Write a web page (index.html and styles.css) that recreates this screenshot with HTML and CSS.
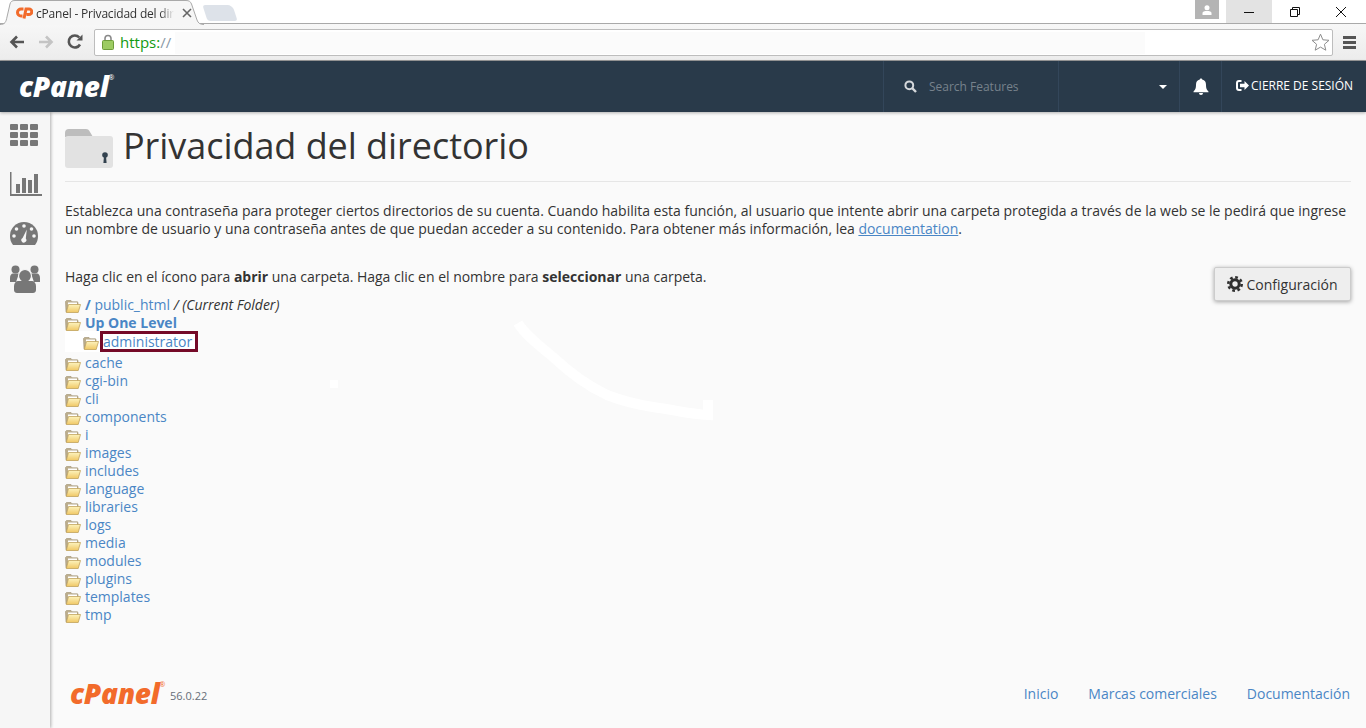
FILE: index.html
```html
<!DOCTYPE html>
<html lang="es">
<head>
    <meta charset="UTF-8">
    <meta name="viewport" content="width=device-width, initial-scale=1.0">
    <title>cPanel - Privacidad del directorio</title>
    <link rel="stylesheet" href="styles.css">
</head>
<body>
    <svg width="0" height="0" class="defs">
        <linearGradient id="fld-front" x1="0" y1="0" x2="0" y2="1">
            <stop offset="0" stop-color="#fdf3bd"/>
            <stop offset="1" stop-color="#f0c865"/>
        </linearGradient>
        <symbol id="folder" viewBox="0 0 16 14">
            <path d="M.5 2.500 1.500 1.500H6l1 1.300h5.500l.5 1V6H3L1.500 13H1z" fill="#bcae8e" stroke="#a09070" stroke-width=".6"/>
            <path d="M3 3.500h9V6H3z" fill="#fff"/>
            <path d="M3.500 5.500H15.500L13.200 13.500H1.300z" fill="url(#fld-front)" stroke="#c2a35c" stroke-width=".8"/>
        </symbol>
    </svg>

    <div class="browser">
        <div class="tabstrip">
            <div class="tab">
                <svg class="tab-shape" width="204" height="25" viewBox="0 0 204 25"><path d="M0 24.500C5 24.500 6 22 7 17L10 4C10.700 1.500 12 .5 15 .5H186C189 .5 190.500 1.500 191.500 4L197 20C198 23 200 24.500 204 24.500" fill="#f6f6f6" stroke="#a9a9a9"/></svg>
                <svg class="favicon" width="17" height="12" viewBox="0 0 17 12"><path d="M7.500 2H5a3.500 3.500 0 0 0 0 7H6.500" fill="none" stroke="#f26b2b" stroke-width="3"/><path d="M8 11.500 10 2H13a2.700 2.700 0 0 1 0 5.600H10.500" fill="none" stroke="#f26b2b" stroke-width="3"/></svg>
                <span class="tab-title">cPanel - Privacidad del dir</span>
                <svg class="tab-close" width="10" height="10" viewBox="0 0 10 10"><path d="M1 1l8 8M9 1 1 9" stroke="#666" stroke-width="1.600"/></svg>
            </div>
            <div class="new-tab"></div>
            <div class="win-controls">
                <div class="win-user">
                    <svg width="12" height="10" viewBox="0 0 12 10"><circle cx="6" cy="2.800" r="2.500" fill="#fff"/><path d="M1.500 10V8C1.500 6.500 3.500 6 6 6s4.500.5 4.500 2v2z" fill="#fff"/></svg>
                </div>
                <div class="win-btn win-min"><svg width="12" height="12" viewBox="0 0 12 12"><path d="M1 6.500h10" stroke="#111"/></svg></div>
                <div class="win-btn"><svg width="12" height="12" viewBox="0 0 12 12"><path d="M1.500 3.500h7v7h-7zM3.500 3.500v-2h7v7h-2" fill="none" stroke="#111"/></svg></div>
                <div class="win-btn"><svg width="12" height="12" viewBox="0 0 12 12"><path d="M1 1l10 10M11 1 1 11" stroke="#111"/></svg></div>
            </div>
        </div>
        <div class="toolbar">
            <svg class="nav-icon" width="16" height="14" viewBox="0 0 16 14"><path d="M15 7H3M8 1.500 2.500 7 8 12.500" fill="none" stroke="#555" stroke-width="2.600"/></svg>
            <svg class="nav-icon" width="16" height="14" viewBox="0 0 16 14"><path d="M1 7h12M8 1.500 13.500 7 8 12.500" fill="none" stroke="#c4c4c4" stroke-width="2.600"/></svg>
            <svg class="nav-icon" width="16" height="16" viewBox="0 0 16 16"><path d="M13 10.500A6 6 0 1 1 12.300 3.500" fill="none" stroke="#555" stroke-width="2.600"/><path d="M9.500 6.500H15.500V.5z" fill="#555"/></svg>
            <div class="urlbar">
                <svg class="lock" width="12" height="16" viewBox="0 0 12 16"><path d="M3 7V4.500a3 3 0 0 1 6 0V7" fill="none" stroke="#8a8a8a" stroke-width="1.600"/><rect x=".5" y="6.500" width="11" height="9" rx="1" fill="#9ccb62" stroke="#6d9c3a"/></svg>
                <span class="url"><span class="url-scheme">https:</span>//</span>
                <div class="url-fade"></div>
                <svg class="star" width="19" height="18" viewBox="0 0 19 18"><path d="M9.500 1.200 11.900 6.800 18 7.300 13.400 11.300 14.800 17.200 9.500 14.100 4.200 17.200 5.600 11.300 1 7.300 7.100 6.800z" fill="none" stroke="#8c8c8c"/></svg>
            </div>
            <div class="menu-btn"><span></span><span></span><span></span></div>
        </div>
    </div>

    <header class="cp-header">
        <div class="cp-logo">cPanel<sup>&reg;</sup></div>
        <div class="cp-search">
            <svg width="13" height="13" viewBox="0 0 13 13"><circle cx="5.300" cy="5.300" r="3.900" fill="none" stroke="#d5d8db" stroke-width="2"/><path d="M8.200 8.200 12 12" stroke="#d5d8db" stroke-width="2.400"/></svg>
            <span>Search Features</span>
        </div>
        <div class="cp-user"><span class="caret"></span></div>
        <div class="cp-bell">
            <svg width="16" height="18" viewBox="0 0 16 18"><path d="M8 .5c.7 0 1.200.5 1.200 1.100C11.800 2.100 13 4.200 13 6.800c0 4 1 5.200 2.500 6.700v.8H.5v-.8C2 12 3 10.800 3 6.800 3 4.200 4.200 2.100 6.800 1.600 6.800 1 7.300.5 8 .5z" fill="#fff"/><path d="M6 15h4a2 2 0 0 1-4 0z" fill="#fff"/></svg>
        </div>
        <div class="cp-logout">
            <svg width="13" height="11" viewBox="0 0 13 11"><path d="M5.500 1H3a2 2 0 0 0-2 2v5a2 2 0 0 0 2 2h2.500" fill="none" stroke="#fff" stroke-width="2"/><path d="M4 3.800h4.500V1L13 5.500 8.500 10V7.200H4z" fill="#fff"/></svg>
            <span>CIERRE DE SESIÓN</span>
        </div>
    </header>

    <div class="cp-body">
        <nav class="sidebar">
            <svg width="28" height="22" viewBox="0 0 28 22" class="side-grid">
                <rect x="0" y="0" width="8" height="6" rx="1"/><rect x="10" y="0" width="8" height="6" rx="1"/><rect x="20" y="0" width="8" height="6" rx="1"/>
                <rect x="0" y="8" width="8" height="6" rx="1"/><rect x="10" y="8" width="8" height="6" rx="1"/><rect x="20" y="8" width="8" height="6" rx="1"/>
                <rect x="0" y="16" width="8" height="6" rx="1"/><rect x="10" y="16" width="8" height="6" rx="1"/><rect x="20" y="16" width="8" height="6" rx="1"/>
            </svg>
            <svg width="32" height="24" viewBox="0 0 32 24" class="side-chart">
                <path d="M0 0h1.500v22H32v2H0z"/><rect x="6" y="12" width="4" height="9"/><rect x="12" y="6" width="4" height="15"/><rect x="18" y="8" width="4" height="13"/><rect x="24" y="2" width="4" height="19"/>
            </svg>
            <svg width="28" height="23" viewBox="0 0 28 23" class="side-gauge">
                <path d="M14 0a14 14 0 0 1 14 14c0 3.500-1 6.500-3 9H3c-2-2.500-3-5.500-3-9A14 14 0 0 1 14 0z"/>
                <g fill="#f6f6f6"><circle cx="14" cy="4" r="1.800"/><circle cx="6.500" cy="7" r="1.800"/><circle cx="21.500" cy="7" r="1.800"/><circle cx="4" cy="14" r="1.800"/><circle cx="24" cy="14" r="1.800"/><path d="M16.800 7.500 15.800 16.500a2.500 2.500 0 1 1-3.200-.6z"/></g>
            </svg>
            <svg width="30" height="30" viewBox="0 0 30 30" class="side-users">
                <circle cx="5.500" cy="5.500" r="4"/><circle cx="24.500" cy="5.500" r="4"/>
                <path d="M0 18v-4c0-3 1.500-4.500 3-4.500h6l-3 8.500zM30 18v-4c0-3-1.500-4.500-3-4.500h-6l3 8.500z"/>
                <circle cx="15" cy="12" r="6.500" stroke="#f6f6f6" stroke-width="1.200"/>
                <path d="M4 26v-4c0-3 2-5 4-5h14c2 0 4 2 4 5v4c0 2-1.500 3-3 3H7c-1.500 0-3-1-3-3z"/>
            </svg>
        </nav>

        <main class="content">
            <div class="page-head">
                <svg width="48" height="40" viewBox="0 0 48 40">
                    <path d="M0 5a4 4 0 0 1 4-4h17c2 0 3 1 4 3l3 5H0z" fill="#bdbdbd"/>
                    <rect x="0" y="8" width="48" height="32" rx="3" fill="#e2e2e2"/>
                    <circle cx="40" cy="27" r="2.800" fill="#33424f"/><path d="M39 28h2l.6 7h-3.200z" fill="#33424f"/>
                </svg>
                <h1>Privacidad del directorio</h1>
            </div>
            <p class="intro">Establezca una contraseña para proteger ciertos directorios de su cuenta. Cuando habilita esta función, al usuario que intente abrir una carpeta protegida a través de la web se le pedirá que ingrese un nombre de usuario y una contraseña antes de que puedan acceder a su contenido. Para obtener más información, lea <a href="#" class="doc-link">documentation</a>.</p>

            <div class="browse">
                <div class="browse-main">
                    <p class="hint">Haga clic en el ícono para <b>abrir</b> una carpeta. Haga clic en el nombre para <b>seleccionar</b> una carpeta.</p>
                    <ul class="tree">
                        <li><svg class="fld"><use href="#folder"/></svg><a href="#" class="strong">/</a>&nbsp;<a href="#">public_html</a>&nbsp;<span class="slash">/</span>&nbsp;<em>(Current Folder)</em></li>
                        <li><svg class="fld"><use href="#folder"/></svg><a href="#" class="strong">Up One Level</a></li>
                        <li class="selected"><svg class="fld"><use href="#folder"/></svg><a href="#" class="sel-box">administrator</a></li>
                        <li><svg class="fld"><use href="#folder"/></svg><a href="#">cache</a></li>
                        <li><svg class="fld"><use href="#folder"/></svg><a href="#">cgi-bin</a></li>
                        <li><svg class="fld"><use href="#folder"/></svg><a href="#">cli</a></li>
                        <li><svg class="fld"><use href="#folder"/></svg><a href="#">components</a></li>
                        <li><svg class="fld"><use href="#folder"/></svg><a href="#">i</a></li>
                        <li><svg class="fld"><use href="#folder"/></svg><a href="#">images</a></li>
                        <li><svg class="fld"><use href="#folder"/></svg><a href="#">includes</a></li>
                        <li><svg class="fld"><use href="#folder"/></svg><a href="#">language</a></li>
                        <li><svg class="fld"><use href="#folder"/></svg><a href="#">libraries</a></li>
                        <li><svg class="fld"><use href="#folder"/></svg><a href="#">logs</a></li>
                        <li><svg class="fld"><use href="#folder"/></svg><a href="#">media</a></li>
                        <li><svg class="fld"><use href="#folder"/></svg><a href="#">modules</a></li>
                        <li><svg class="fld"><use href="#folder"/></svg><a href="#">plugins</a></li>
                        <li><svg class="fld"><use href="#folder"/></svg><a href="#">templates</a></li>
                        <li><svg class="fld"><use href="#folder"/></svg><a href="#">tmp</a></li>
                    </ul>
                </div>
                <button class="settings-btn">
                    <svg width="16" height="16" viewBox="0 0 16 16"><circle cx="8" cy="8" r="4.200" fill="none" stroke="#2f2f2f" stroke-width="3"/><circle cx="8" cy="8" r="6.700" fill="none" stroke="#2f2f2f" stroke-width="2.600" stroke-dasharray="2.700 2.560"/></svg>
                    Configuración
                </button>
            </div>

            <footer class="cp-footer">
                <div class="foot-brand"><span class="foot-logo">cPanel<sup>&reg;</sup></span><span class="version">56.0.22</span></div>
                <div class="foot-links"><a href="#">Inicio</a><a href="#">Marcas comerciales</a><a href="#">Documentación</a></div>
            </footer>
        </main>
    </div>

    <!-- white scribble that sits on top of the page -->
    <svg class="scribble" width="1366" height="728" viewBox="0 0 1366 728">
        <path d="M518 323 C525 335 540 346 553 357 C570 373 590 387 607 395 C625 402 640 405 653 407 C675 410 690 414 708 415 L708 400" fill="none" stroke="#fff" stroke-width="10"/>
        <rect x="330" y="380" width="8" height="8" fill="#fff"/>
    </svg>
</body>
</html>
```

FILE: styles.css
```css
* {
    box-sizing: border-box;
}

html, body {
    margin: 0;
    height: 728px;
    overflow: hidden;
}

body {
    font-family: "Open Sans", Arial, sans-serif;
    font-size: 14px;
    letter-spacing: -0.01px;
    color: #333;
    background-color: #fafafa;
    display: flex;
    flex-direction: column;
}

a {
    color: #4a86c5;
    text-decoration: none;
}

.defs {
    position: absolute;
}

/* browser window */
.browser {
    height: 61px;
    flex: none;
}

.tabstrip {
    height: 24px;
    background-color: #fff;
    display: flex;
    align-items: flex-start;
    position: relative;
    border-bottom: 1px solid #a9a9a9;
}

.tab {
    position: relative;
    width: 200px;
    height: 25px;
    display: flex;
    align-items: center;
    padding: 1px 0 0 16px;
    z-index: 1;
}

.tab-shape {
    position: absolute;
    left: 0;
    top: 0;
}

.favicon {
    position: relative;
    flex: none;
    margin-right: 3px;
}

.tab-title {
    position: relative;
    width: 138px;
    overflow: hidden;
    white-space: nowrap;
    font-size: 12px;
    letter-spacing: -0.2px;
    color: #333;
    -webkit-mask-image: linear-gradient(to right, #000 90%, transparent);
    mask-image: linear-gradient(to right, #000 90%, transparent);
}

.tab-close {
    position: relative;
    margin-left: 8px;
    flex: none;
}

.new-tab {
    width: 30px;
    height: 16px;
    margin: 5px 0 0 5px;
    background-color: #dde2e9;
    border-radius: 3px 5px 3px 3px;
    transform: skewX(18deg);
}

.win-controls {
    margin-left: auto;
    margin-right: 2px;
    display: flex;
    align-items: flex-start;
    height: 23px;
}

.win-user {
    width: 24px;
    height: 19px;
    margin-right: 7px;
    background-color: #b4b4b4;
    display: flex;
    align-items: center;
    justify-content: center;
}

.win-btn {
    width: 46px;
    height: 23px;
    display: flex;
    align-items: center;
    justify-content: center;
}

.win-min {
    background-color: #e3e3e3;
}

.toolbar {
    height: 37px;
    background: linear-gradient(#f7f7f7, #ececec);
    border-bottom: 1px solid #9a9a9a;
    display: flex;
    align-items: center;
    padding-left: 9px;
    gap: 13px;
}

.nav-icon {
    flex: none;
}

.urlbar {
    width: 1239px;
    height: 27px;
    margin-left: -2px;
    background-color: #fff;
    border: 1px solid #bdbdbd;
    border-radius: 2px;
    display: flex;
    align-items: center;
    padding-left: 7px;
    position: relative;
}

.url-fade {
    position: absolute;
    left: 80px;
    top: 2px;
    width: 970px;
    height: 22px;
    background-color: #fbfbfb;
}

.lock {
    flex: none;
}

.url {
    position: relative;
    margin-left: 6px;
    font-size: 15px;
    letter-spacing: 0;
    color: #8a9aa8;
    z-index: 1;
}

.url-scheme {
    color: #129a12;
}

.star {
    margin-left: auto;
    margin-right: 2px;
    position: relative;
}

.menu-btn {
    margin-left: -3px;
    width: 13px;
    display: flex;
    flex-direction: column;
    gap: 2px;
}

.menu-btn span {
    height: 3px;
    background-color: #555;
}

/* cpanel header */
.cp-header {
    height: 51px;
    flex: none;
    background-color: #293a4a;
    display: flex;
    align-items: stretch;
    color: #fff;
    box-shadow: 0 1px 3px rgba(0, 0, 0, 0.3);
    position: relative;
    z-index: 2;
}

.cp-logo {
    width: 883px;
    padding-left: 19px;
    font-style: italic;
    font-weight: 800;
    font-size: 28px;
    letter-spacing: -0.3px;
    line-height: 50px;
}

.cp-logo sup {
    font-size: 7px;
    font-style: normal;
    font-weight: 400;
    vertical-align: 17px;
    line-height: 0;
}

.cp-search {
    width: 175px;
    border-left: 1px solid #33465a;
    display: flex;
    align-items: center;
    padding-left: 20px;
    gap: 12px;
    font-size: 12px;
    color: #77828c;
}

.cp-user {
    width: 121px;
    border-left: 1px solid #33465a;
    display: flex;
    align-items: center;
    justify-content: flex-end;
    padding-right: 12px;
}

.caret {
    border-top: 4px solid #fff;
    border-left: 4px solid transparent;
    border-right: 4px solid transparent;
}

.cp-bell {
    width: 42px;
    border-left: 1px solid #33465a;
    display: flex;
    align-items: center;
    justify-content: center;
}

.cp-logout {
    flex: 1;
    border-left: 1px solid #33465a;
    display: flex;
    align-items: center;
    padding: 0 0 2px 14px;
    gap: 2px;
    font-size: 12px;
    white-space: nowrap;
}

/* page */
.cp-body {
    flex: 1;
    display: flex;
    min-height: 0;
}

.sidebar {
    width: 50px;
    flex: none;
    background-color: #f6f6f6;
    box-shadow: 1px 0 3px rgba(0, 0, 0, 0.3);
    padding: 12px 0 0 10px;
    display: flex;
    flex-direction: column;
    align-items: flex-start;
    fill: #777;
}

.side-chart {
    margin-top: 26px;
}

.side-gauge {
    margin-top: 26px;
}

.side-users {
    margin-top: 19px;
}

.content {
    flex: 1;
    padding: 16px 15px 0;
    display: flex;
    flex-direction: column;
    min-width: 0;
}

.page-head {
    display: flex;
    align-items: center;
    gap: 10px;
    height: 54px;
    border-bottom: 1px solid #e6e6e6;
    padding-bottom: 13px;
}

h1 {
    margin: 0;
    padding-bottom: 4px;
    font-size: 36px;
    font-weight: 400;
    line-height: 36px;
    letter-spacing: -0.05px;
    color: #333;
}

.intro {
    margin: 20px 0 0;
    line-height: 18px;
}

.doc-link {
    text-decoration: underline;
}

.browse {
    margin-top: 30px;
    display: flex;
    justify-content: space-between;
    align-items: flex-start;
}

.hint {
    margin: 0 0 10px;
    line-height: 18px;
}

.settings-btn {
    margin: -1px 0 0 auto;
    height: 34px;
    width: 137px;
    background-color: #eee;
    border: 1px solid #ccc;
    border-radius: 2px;
    box-shadow: 0 1px 4px rgba(0, 0, 0, 0.35);
    font-family: inherit;
    font-size: 14px;
    color: #333;
    display: flex;
    align-items: center;
    justify-content: center;
    gap: 3px;
}

.tree {
    list-style: none;
    margin: 0;
    padding: 0;
}

.tree li {
    height: 18px;
    line-height: 18px;
    display: flex;
    align-items: center;
    color: #333;
    white-space: pre;
}

.fld {
    width: 16px;
    height: 14px;
    margin: 2px 4px 0 0;
    flex: none;
}

.tree .strong {
    font-weight: 700;
}

.tree .slash {
    font-style: italic;
}

.tree .selected {
    height: 21px;
    padding-left: 18px;
    margin: -1px 0 2px;
    background: linear-gradient(#fff, #fff) no-repeat 0 0 / 36px 100%;
}

.tree .selected .fld {
    margin-right: 1px;
}

.sel-box {
    border: 3px solid #750a28;
    background-color: #fff;
    padding: 0 3px 0 0;
    height: 21px;
    line-height: 15px;
    width: 98px;
}

.cp-footer {
    margin-top: auto;
    padding-bottom: 21px;
    display: flex;
    justify-content: space-between;
    align-items: center;
}

.foot-brand {
    display: flex;
    align-items: center;
    padding-left: 5px;
}

.foot-logo {
    font-style: italic;
    font-weight: 800;
    font-size: 28px;
    letter-spacing: -0.3px;
    line-height: 28px;
    color: #f26b2b;
}

.foot-logo sup {
    font-size: 7px;
    font-style: normal;
    font-weight: 400;
    vertical-align: 17px;
    line-height: 0;
}

.version {
    margin: 5px 0 0 5px;
    font-size: 11px;
    color: #666e78;
}

.foot-links {
    display: flex;
    gap: 30px;
    padding-right: 1px;
}

.scribble {
    position: absolute;
    left: 0;
    top: 0;
    pointer-events: none;
}
```
